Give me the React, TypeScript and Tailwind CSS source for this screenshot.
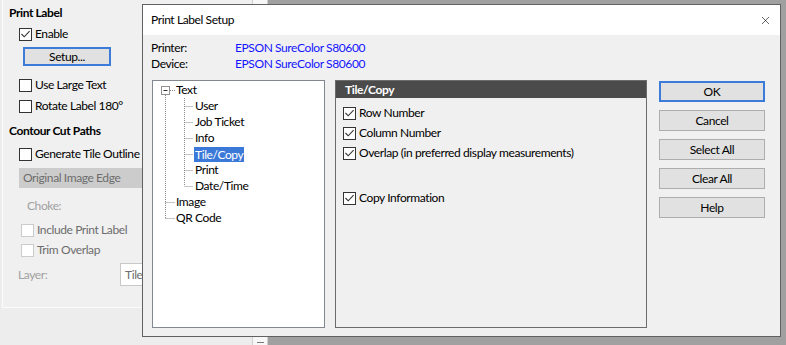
import { X } from "lucide-react";

type CheckProps = { checked?: boolean; disabled?: boolean };

const Check = ({ checked, disabled }: CheckProps) => (
  <span
    className={
      disabled
        ? "w-[13px] h-[13px] shrink-0 border border-[#cccccc] bg-white flex items-center justify-center"
        : "w-[13px] h-[13px] shrink-0 border border-[#333333] bg-white flex items-center justify-center"
    }
  >
    {checked && (
      <svg width="11" height="11" viewBox="0 0 11 11">
        <path d="M1.5 5 L4.2 7.8 L9.6 2.2" fill="none" stroke="#333333" strokeWidth="1.1" />
      </svg>
    )}
  </span>
);

const WinButton = ({ label, focused }: { label: string; focused?: boolean }) => (
  <div
    className={
      focused
        ? "h-[21px] w-full flex items-center justify-center bg-[#e1e1e1] border-2 border-[#3c7bd9]"
        : "h-[21px] w-full flex items-center justify-center bg-[#e1e1e1] border border-[#adadad]"
    }
  >
    {label}
  </div>
);

const treeSub = ["User", "Job Ticket", "Info", "Tile/Copy", "Print", "Date/Time"];

const App = () => {
  return (
    <div className="relative w-[786px] h-[345px] overflow-hidden bg-[#ededed] text-[12px] leading-[16px] tracking-[-0.4px] text-black font-['Lato',sans-serif]">
      {/* Background application window */}
      <div className="flex h-full">
        <div className="w-[252px] shrink-0">
          <div className="ml-[2px] h-[308px] border-l border-b border-[#fbfbfb] bg-[#f0f0f0] flex flex-col">
            <div className="mt-[5px] ml-[6px] h-[16px] font-bold">Print Label</div>
            <div className="mt-[5px] ml-[16px] h-[16px] flex items-center gap-[3px]">
              <Check checked />
              <span>Enable</span>
            </div>
            <div className="mt-[5px] ml-[20px] w-[88px] h-[19px] flex items-center justify-center bg-[#e1e1e1] border-2 border-[#3c7bd9]">
              Setup...
            </div>
            <div className="mt-[11px] ml-[16px] h-[16px] flex items-center gap-[3px]">
              <Check />
              <span>Use Large Text</span>
            </div>
            <div className="mt-[5px] ml-[16px] h-[16px] flex items-center gap-[3px]">
              <Check />
              <span>Rotate Label 180°</span>
            </div>
            <div className="mt-[9px] ml-[6px] h-[16px] font-bold">Contour Cut Paths</div>
            <div className="mt-[7px] ml-[16px] h-[16px] flex items-center gap-[3px] whitespace-nowrap">
              <Check />
              <span>Generate Tile Outline Cut Path</span>
            </div>
            <div className="mt-[6px] ml-[16px] h-[20px] bg-[#cccccc] text-[#6d6d6d] flex items-center pl-[4px]">
              Original Image Edge
            </div>
            <div className="mt-[10px] ml-[24px] h-[16px] text-[#a0a0a0]">Choke:</div>
            <div className="mt-[8px] ml-[18px] h-[16px] flex items-center gap-[3px] text-[#6d6d6d]">
              <Check disabled />
              <span>Include Print Label</span>
            </div>
            <div className="mt-[4px] ml-[18px] h-[16px] flex items-center gap-[3px] text-[#6d6d6d]">
              <Check disabled />
              <span>Trim Overlap</span>
            </div>
            <div className="mt-[5px] ml-[15px] h-[23px] flex items-center">
              <span className="w-[102px] text-[#a0a0a0]">Layer:</span>
              <div className="flex-1 h-[23px] border border-[#c8c8c8] bg-white text-[#6d6d6d] flex items-center pl-[4px]">
                Tiles
              </div>
            </div>
          </div>
        </div>
        <div className="w-[16px] shrink-0 bg-[#f7f7f7] border-x border-[#cfcfcf] flex items-end justify-center pb-[2px]">
          <div className="w-[7px] h-[1px] bg-[#7a7a7a]" />
        </div>
        <div className="flex-1 bg-[#a0a0a0]" />
      </div>

      {/* Print Label Setup dialog */}
      <div className="absolute left-[142px] top-[4px] w-[639px] h-[333px] border border-[#616161] bg-[#f0f0f0] flex flex-col">
        <div className="h-[30px] bg-white flex items-center justify-between pl-[8px] pr-[8px]">
          <span>Print Label Setup</span>
          <X size={13} strokeWidth={1.1} className="text-black" />
        </div>
        <div className="flex-1 flex flex-col">
          <div className="mt-[5px] pl-[8px] flex h-[16px]">
            <span className="w-[84px]">Printer:</span>
            <span className="text-[#1414ff]">EPSON SureColor S80600</span>
          </div>
          <div className="pl-[8px] flex h-[16px]">
            <span className="w-[84px]">Device:</span>
            <span className="text-[#1414ff]">EPSON SureColor S80600</span>
          </div>

          <div className="mt-[8px] pl-[9px] flex">
            {/* tree */}
            <div className="relative w-[173px] h-[248px] border border-[#828790] bg-white pt-[1px]">
              <svg className="absolute left-0 top-0" width="171" height="160">
                <g stroke="#8a8a8a" strokeDasharray="1 1" fill="none">
                  <path d="M12.5 14 V137" />
                  <path d="M17 9.5 H22" />
                  <path d="M31.5 17 V105" />
                  <path d="M31.5 25.5 H40 M31.5 41.5 H40 M31.5 57.5 H40 M31.5 73.5 H40 M31.5 89.5 H40 M31.5 105.5 H40" />
                  <path d="M12.5 121.5 H22 M12.5 137.5 H22" />
                </g>
                <rect x="8.5" y="5.5" width="8" height="8" fill="white" stroke="#919191" />
                <path d="M10.5 9.5 H14.5" stroke="#333333" />
              </svg>
              <div className="h-[16px] pl-[23px]">Text</div>
              {treeSub.map((t) =>
                t === "Tile/Copy" ? (
                  <div key={t} className="h-[16px] pl-[41px] flex items-end">
                    <span className="h-[15px] leading-[15px] px-[1px] bg-[#3b79d8] text-white">{t}</span>
                  </div>
                ) : (
                  <div key={t} className="h-[16px] pl-[42px]">
                    {t}
                  </div>
                )
              )}
              <div className="h-[16px] pl-[23px]">Image</div>
              <div className="h-[16px] pl-[23px]">QR Code</div>
            </div>

            {/* settings panel */}
            <div className="ml-[10px] w-[312px] h-[248px] border border-[#6c6c6c] flex flex-col">
              <div className="h-[17px] bg-[#4b4b4b] text-white font-bold pl-[9px] flex items-center">Tile/Copy</div>
              <div className="mt-[7px] pl-[7px] h-[16px] flex items-center gap-[3px]">
                <Check checked />
                <span>Row Number</span>
              </div>
              <div className="mt-[4px] pl-[7px] h-[16px] flex items-center gap-[3px]">
                <Check checked />
                <span>Column Number</span>
              </div>
              <div className="mt-[4px] pl-[7px] h-[16px] flex items-center gap-[3px]">
                <Check checked />
                <span>Overlap (in preferred display measurements)</span>
              </div>
              <div className="mt-[29px] pl-[7px] h-[16px] flex items-center gap-[3px]">
                <Check checked />
                <span>Copy Information</span>
              </div>
            </div>

            {/* buttons */}
            <div className="ml-[12px] mt-[1px] w-[106px] flex flex-col gap-[8px]">
              <WinButton label="OK" focused />
              <WinButton label="Cancel" />
              <WinButton label="Select All" />
              <WinButton label="Clear All" />
              <WinButton label="Help" />
            </div>
          </div>
        </div>
      </div>
    </div>
  );
};

export default App;
